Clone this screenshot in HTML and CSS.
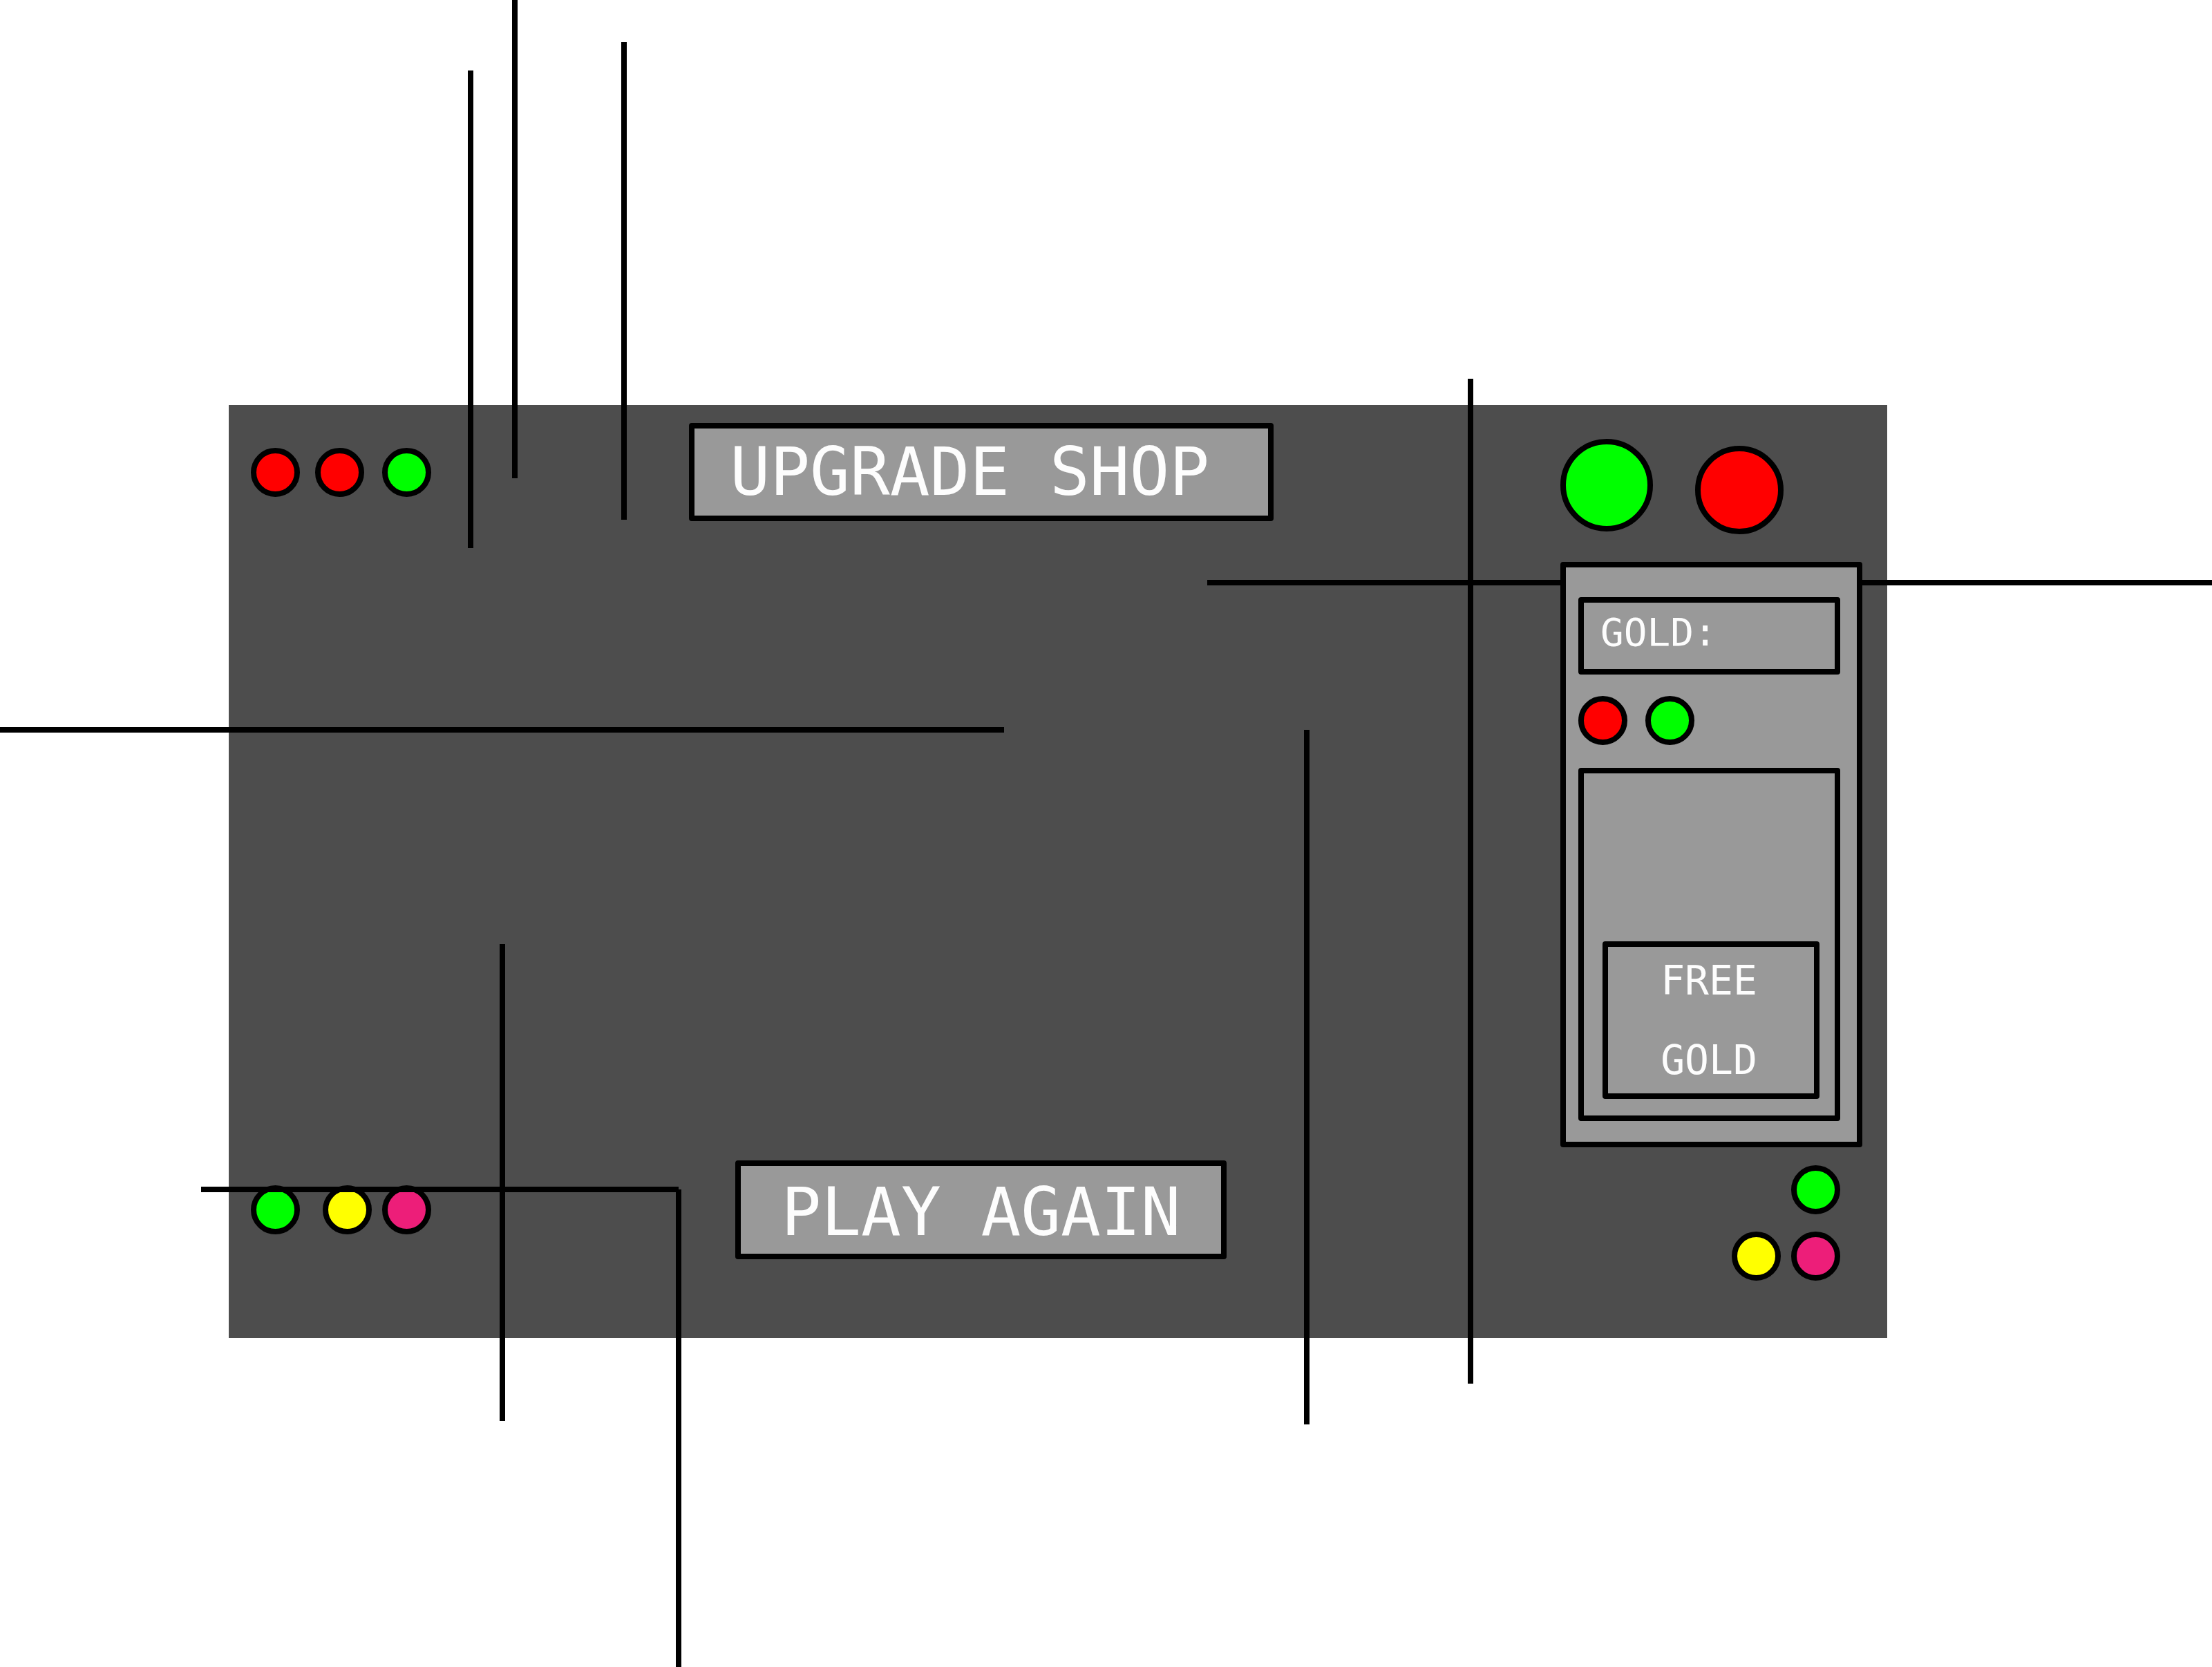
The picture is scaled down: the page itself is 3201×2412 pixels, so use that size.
FILE: index.html
```html
<!DOCTYPE html>
<html lang="en">
<head>
<meta charset="utf-8">
<title>Upgrade Shop</title>
<link rel="stylesheet" href="styles.css">
</head>
<body>
<div class="stage">
  <main class="board">
    <div class="lights lights-top">
      <span class="light red"></span>
      <span class="light red"></span>
      <span class="light green"></span>
    </div>
    <h1 class="sign title">UPGRADE SHOP</h1>
    <aside class="side">
      <div class="beacons">
        <span class="light beacon-large green"></span>
        <span class="light beacon-small red"></span>
      </div>
      <section class="console" aria-label="Gold">
        <p class="gold-total">GOLD:</p>
        <div class="console-lights">
          <span class="light red"></span>
          <span class="light green"></span>
        </div>
        <div class="screen">
          <button type="button" class="free-gold"><span>FREE</span> <span>GOLD</span></button>
        </div>
      </section>
      <div class="corner-lights">
        <span class="light green corner-first"></span>
        <span class="light yellow"></span>
        <span class="light pink"></span>
      </div>
    </aside>
    <div class="lights lights-bottom">
      <span class="light green"></span>
      <span class="light yellow"></span>
      <span class="light pink"></span>
    </div>
    <button type="button" class="sign play">PLAY AGAIN</button>
  </main>
  <div class="wires" aria-hidden="true">
    <span class="wire v w1"></span>
    <span class="wire v w2"></span>
    <span class="wire v w3"></span>
    <span class="wire v w4"></span>
    <span class="wire v w5"></span>
    <span class="wire v w6"></span>
    <span class="wire v w7"></span>
    <span class="wire h w8"></span>
    <span class="wire h w9"></span>
    <span class="wire h w10"></span>
  </div>
</div>
</body>
</html>
```
FILE: styles.css
```css
* {
  box-sizing: border-box;
}

body {
  margin: 0;
  background: #fff;
  color: #fdfdfd;
  font-family: "DejaVu Sans Mono", "Liberation Mono", monospace;
}

.stage {
  position: relative;
  overflow: hidden;
  min-height: 100vh;
  padding: 586px 470px 476px 331px;
}

.board {
  display: grid;
  grid-template-columns: 261px 1fr auto;
  grid-template-rows: auto 1fr auto;
  padding: 26px 36px 83px 32px;
  background: #4d4d4d;
}

/* Indicator lights */
.light {
  display: block;
  width: 71px;
  height: 71px;
  border: 8px solid #000;
  border-radius: 50%;
}

.red { background: #f00; }
.green { background: #0f0; }
.yellow { background: #ff0; }
.pink { background: #ed1e79; }

.lights {
  display: grid;
  align-items: center;
}

.lights-top {
  grid-template-columns: 93px 97px 71px;
}

.lights-bottom {
  grid-row: 3;
  grid-template-columns: 104px 86px 71px;
  margin-bottom: 31px;
}

/* Signs */
.sign,
.gold-total,
.screen,
.free-gold,
.console {
  margin: 0;
  border: 8px solid #000;
  border-radius: 4px;
  background: #999;
}

.sign {
  justify-self: center;
  color: inherit;
  font: 400 96px/126px "DejaVu Sans Mono", "Liberation Mono", monospace;
  white-space: nowrap;
}

.title {
  width: 846px;
  padding: 0 0 0 52px;
}

.play {
  grid-row: 3;
  width: 711px;
  margin-bottom: 31px;
  padding: 8px 0 0;
  line-height: 119px;
}

/* Right-hand column */
.side {
  position: relative;
  z-index: 2;
  grid-column: 3;
  grid-row: 1 / 4;
  margin-left: 43px;
  padding-top: 23px;
}

.beacons {
  display: flex;
  align-items: flex-start;
  gap: 61px;
  margin-bottom: 40px;
}

.beacon-large {
  width: 134px;
  height: 134px;
}

.beacon-small {
  width: 128px;
  height: 128px;
  margin-top: 10px;
}

.console {
  width: 437px;
  padding: 43px 24px 30px 18px;
}

.gold-total {
  height: 112px;
  padding-left: 24px;
  font-size: 56px;
  line-height: 86px;
}

.console-lights {
  display: flex;
  gap: 26px;
  margin: 31px 0 33px;
}

.screen {
  padding: 243px 22px 24px 27px;
}

.free-gold {
  display: flex;
  flex-direction: column;
  align-items: center;
  justify-content: center;
  gap: 55px;
  width: 100%;
  height: 228px;
  padding: 0 6px 0 0;
  color: inherit;
  font: 400 58px/60px "DejaVu Sans Mono", "Liberation Mono", monospace;
}

.corner-lights {
  display: grid;
  grid-template-columns: 71px 71px;
  justify-content: end;
  gap: 25px 15px;
  margin: 26px 32px 0 0;
}

.corner-first {
  grid-column: 2;
}

/* Loose wires lying across the board */
.wires {
  position: absolute;
  inset: 0;
  z-index: 1;
  pointer-events: none;
}

.wire {
  position: absolute;
  background: #000;
}

.v { width: 8px; }
.h { height: 8px; }

.w1 { left: 677px; top: 102px; height: 691px; }
.w2 { left: 741px; top: 0; height: 692px; }
.w3 { left: 899px; top: 61px; height: 691px; }
.w4 { left: 2124px; top: 548px; height: 1454px; }
.w5 { left: 1887px; top: 1056px; height: 1005px; }
.w6 { left: 723px; top: 1366px; height: 690px; }
.w7 { left: 978px; top: 1721px; bottom: 0; }
.w8 { left: 1747px; right: 0; top: 839px; }
.w9 { left: 0; width: 1453px; top: 1052px; }
.w10 { left: 291px; width: 691px; top: 1717px; }
```
